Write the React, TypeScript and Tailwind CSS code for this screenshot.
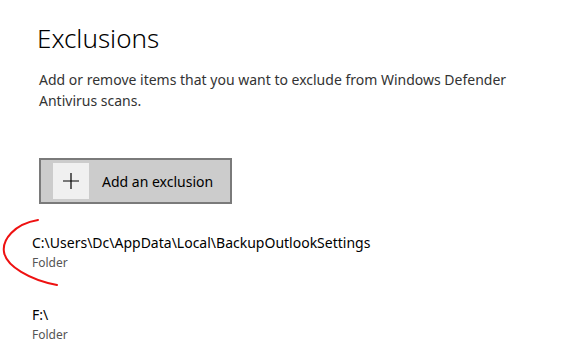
import React from "react";

export default function App() {
  return (
    <div className="relative w-[561px] h-[360px] bg-white overflow-hidden" style={{ fontFamily: '"Noto Sans", "Open Sans", sans-serif' }}>
      <div className="pl-[37px] pt-[22px]">
        <h1 className="text-[26px] leading-[32px] font-light text-black">Exclusions</h1>
        <p className="mt-[15px] ml-[2px] w-[500px] text-[14px] leading-[21px] text-[#333333]">
          Add or remove items that you want to exclude from Windows Defender
          <br />
          Antivirus scans.
        </p>
        <button className="mt-[47px] ml-[2px] flex items-center w-[193px] h-[46px] border-2 border-[#7a7a7a] bg-[#cccccc] pl-[12px]">
          <span className="flex items-center justify-center w-[36px] h-[36px] bg-[#f0f0f0]">
            <svg width="18" height="18" viewBox="0 0 18 18">
              <path d="M9 1 V17 M1 9 H17" stroke="#000" strokeWidth="1.2" fill="none" />
            </svg>
          </span>
          <span className="ml-[13px] text-[14px] text-black">Add an exclusion</span>
        </button>
        <div className="mt-[29px] ml-[-5px] flex flex-col">
          <div className="text-[14px] leading-[20px] text-black">C:\Users\Dc\AppData\Local\BackupOutlookSettings</div>
          <div className="text-[12px] leading-[20px] text-[#555555]">Folder</div>
        </div>
        <div className="mt-[32px] ml-[-5px] flex flex-col">
          <div className="text-[14px] leading-[20px] text-black">F:\</div>
          <div className="text-[12px] leading-[20px] text-[#555555]">Folder</div>
        </div>
      </div>
      <svg className="absolute left-0 top-0" width="561" height="360" viewBox="0 0 561 360">
        <path d="M38 220 C 14 224, 2 240, 4 252 C 6 266, 30 280, 57 285" stroke="#ee1111" strokeWidth="2" fill="none" strokeLinecap="round" />
      </svg>
    </div>
  );
}
